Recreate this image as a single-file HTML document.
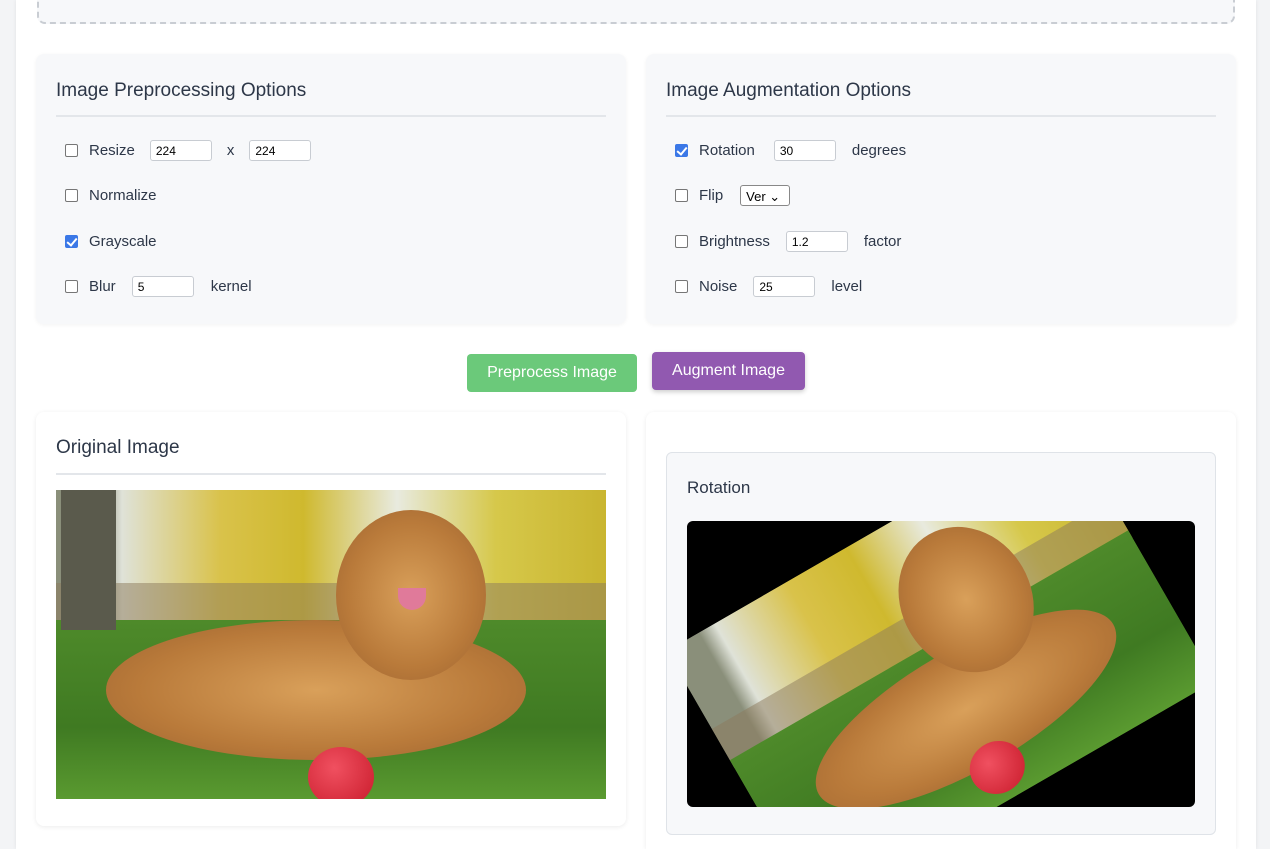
<!DOCTYPE html>
<html><head><meta charset="utf-8"><style>
*{box-sizing:border-box}
html,body{overflow:hidden}
body{margin:0;width:1270px;height:849px;overflow:hidden;background:#f3f4f6;font-family:"Liberation Sans",sans-serif;color:#2d3748;position:relative}
.page{position:absolute;left:16px;top:0;width:1240px;height:849px;background:#fff;box-shadow:0 0 4px rgba(0,0,0,.08)}
.drop{position:absolute;left:37px;top:-10px;width:1198px;height:34px;border:2px dashed #c9cdd3;border-radius:8px;background:#f7f8fa}
.card{position:absolute;background:#f7f8fa;border-radius:8px;box-shadow:0 1px 4px rgba(0,0,0,.05)}
.card h3{margin:0;position:absolute;left:20px;top:26px;font-size:19px;font-weight:normal;color:#2d3748}
.card .rule{position:absolute;left:20px;right:20px;top:61px;height:2px;background:#e3e6ea}
.row{position:absolute;left:29px;font-size:15px;display:flex;align-items:center;height:22px}
.cb{width:13px;height:13px;border:1px solid #767676;border-radius:2px;background:#fff;margin-right:11px}
.cb.on{background:#3b78e7;border-color:#3b78e7;position:relative}
.cb.on:after{content:"";position:absolute;left:3px;top:0px;width:4px;height:8px;border:solid #fff;border-width:0 2px 2px 0;transform:rotate(40deg)}
.in{width:62px;height:21px;border:1px solid #c8ccd2;border-radius:3px;background:#fff;font-size:12px;padding:3px 5px;color:#000}
.btn{position:absolute;color:#fff;font-size:16px;border-radius:4px;text-align:center;line-height:38px;height:38px}
.photo{position:absolute;overflow:hidden}
.photo .sky{position:absolute;left:0;right:0;top:0;height:45%;background:linear-gradient(90deg,#8a8f7a 0 8%,#dfe2d8 12%,#d9c24a 30%,#cfb92e 45%,#e8eadf 62%,#d6c84a 80%,#c9b530 100%)}
.photo .fence{position:absolute;left:0;right:0;top:30%;height:12%;background:#8c7a5c;opacity:.5}
.photo .grass{position:absolute;left:0;right:0;top:42%;bottom:0;background:linear-gradient(180deg,#4e8a2a,#3f7a22 60%,#5a9a30)}
.photo .dog{position:absolute;background:radial-gradient(ellipse at 50% 50%,#d9a05a,#b97a3a 60%,#9b6230);border-radius:50%}
.photo .ball{position:absolute;border-radius:50%;background:radial-gradient(circle at 40% 35%,#f05060,#c81a2a)}
</style></head><body>
<div class="page"></div>
<div class="drop"></div>

<div class="card" style="left:36px;top:54px;width:590px;height:270px">
<h3>Image Preprocessing Options</h3><div class="rule"></div>
<div class="row" style="top:85px"><div class="cb"></div>Resize<div class="in" style="margin-left:15px">224</div><span style="margin:0 15px">x</span><div class="in">224</div></div>
<div class="row" style="top:130px"><div class="cb"></div>Normalize</div>
<div class="row" style="top:176px"><div class="cb on"></div>Grayscale</div>
<div class="row" style="top:221px"><div class="cb"></div>Blur<div class="in" style="margin-left:16px">5</div><span style="margin-left:17px">kernel</span></div>
</div>

<div class="card" style="left:646px;top:54px;width:590px;height:270px">
<h3>Image Augmentation Options</h3><div class="rule"></div>
<div class="row" style="top:85px"><div class="cb on"></div>Rotation<div class="in" style="margin-left:19px">30</div><span style="margin-left:16px">degrees</span></div>
<div class="row" style="top:130px"><div class="cb"></div>Flip<div class="in" style="margin-left:17px;width:50px;border-color:#888;font-size:13px">Ver ⌄</div></div>
<div class="row" style="top:176px"><div class="cb"></div>Brightness<div class="in" style="margin-left:16px">1.2</div><span style="margin-left:16px">factor</span></div>
<div class="row" style="top:221px"><div class="cb"></div>Noise<div class="in" style="margin-left:16px">25</div><span style="margin-left:16px">level</span></div>
</div>

<div class="btn" style="left:467px;top:354px;width:170px;background:#6bc97a">Preprocess Image</div>
<div class="btn" style="left:652px;top:352px;width:153px;background:#9159b0;box-shadow:0 2px 5px rgba(0,0,0,.2)">Augment Image</div>

<div class="card" style="left:36px;top:412px;width:590px;height:414px;background:#fff;box-shadow:0 1px 5px rgba(0,0,0,.08)">
<h3 style="top:25px">Original Image</h3><div class="rule"></div>
<div class="photo" style="left:20px;top:78px;width:550px;height:309px">
<div class="sky"></div><div class="fence"></div><div class="grass"></div>
<div style="position:absolute;left:5px;top:0;width:55px;height:140px;background:#5a5a4c"></div>
<div class="dog" style="left:50px;top:130px;width:420px;height:140px"></div>
<div class="dog" style="left:280px;top:20px;width:150px;height:170px"></div>
<div style="position:absolute;left:342px;top:98px;width:28px;height:22px;background:#e07a9a;border-radius:0 0 14px 14px"></div>
<div class="ball" style="left:252px;top:257px;width:66px;height:60px"></div>
</div></div>

<div class="card" style="left:646px;top:412px;width:590px;height:437px;background:#fff;box-shadow:0 1px 5px rgba(0,0,0,.08);border-radius:8px 8px 0 0">
<div style="position:absolute;left:20px;top:40px;width:550px;height:383px;border:1px solid #dfe3e8;border-radius:6px;background:#f7f8fa">
<div style="position:absolute;left:20px;top:25px;font-size:17px">Rotation</div>
<div style="position:absolute;left:20px;top:68px;width:508px;height:286px;background:#000;border-radius:6px;overflow:hidden">
<div class="photo" style="width:460px;height:300px;transform:rotate(-30deg);transform-origin:50% 50%;left:24px;top:-5px">
<div class="sky"></div><div class="fence"></div><div class="grass"></div>
<div class="dog" style="left:60px;top:140px;width:340px;height:120px"></div>
<div class="dog" style="left:220px;top:30px;width:130px;height:150px"></div>
<div class="ball" style="left:200px;top:240px;width:56px;height:52px"></div>
</div></div></div></div>
</body></html>
